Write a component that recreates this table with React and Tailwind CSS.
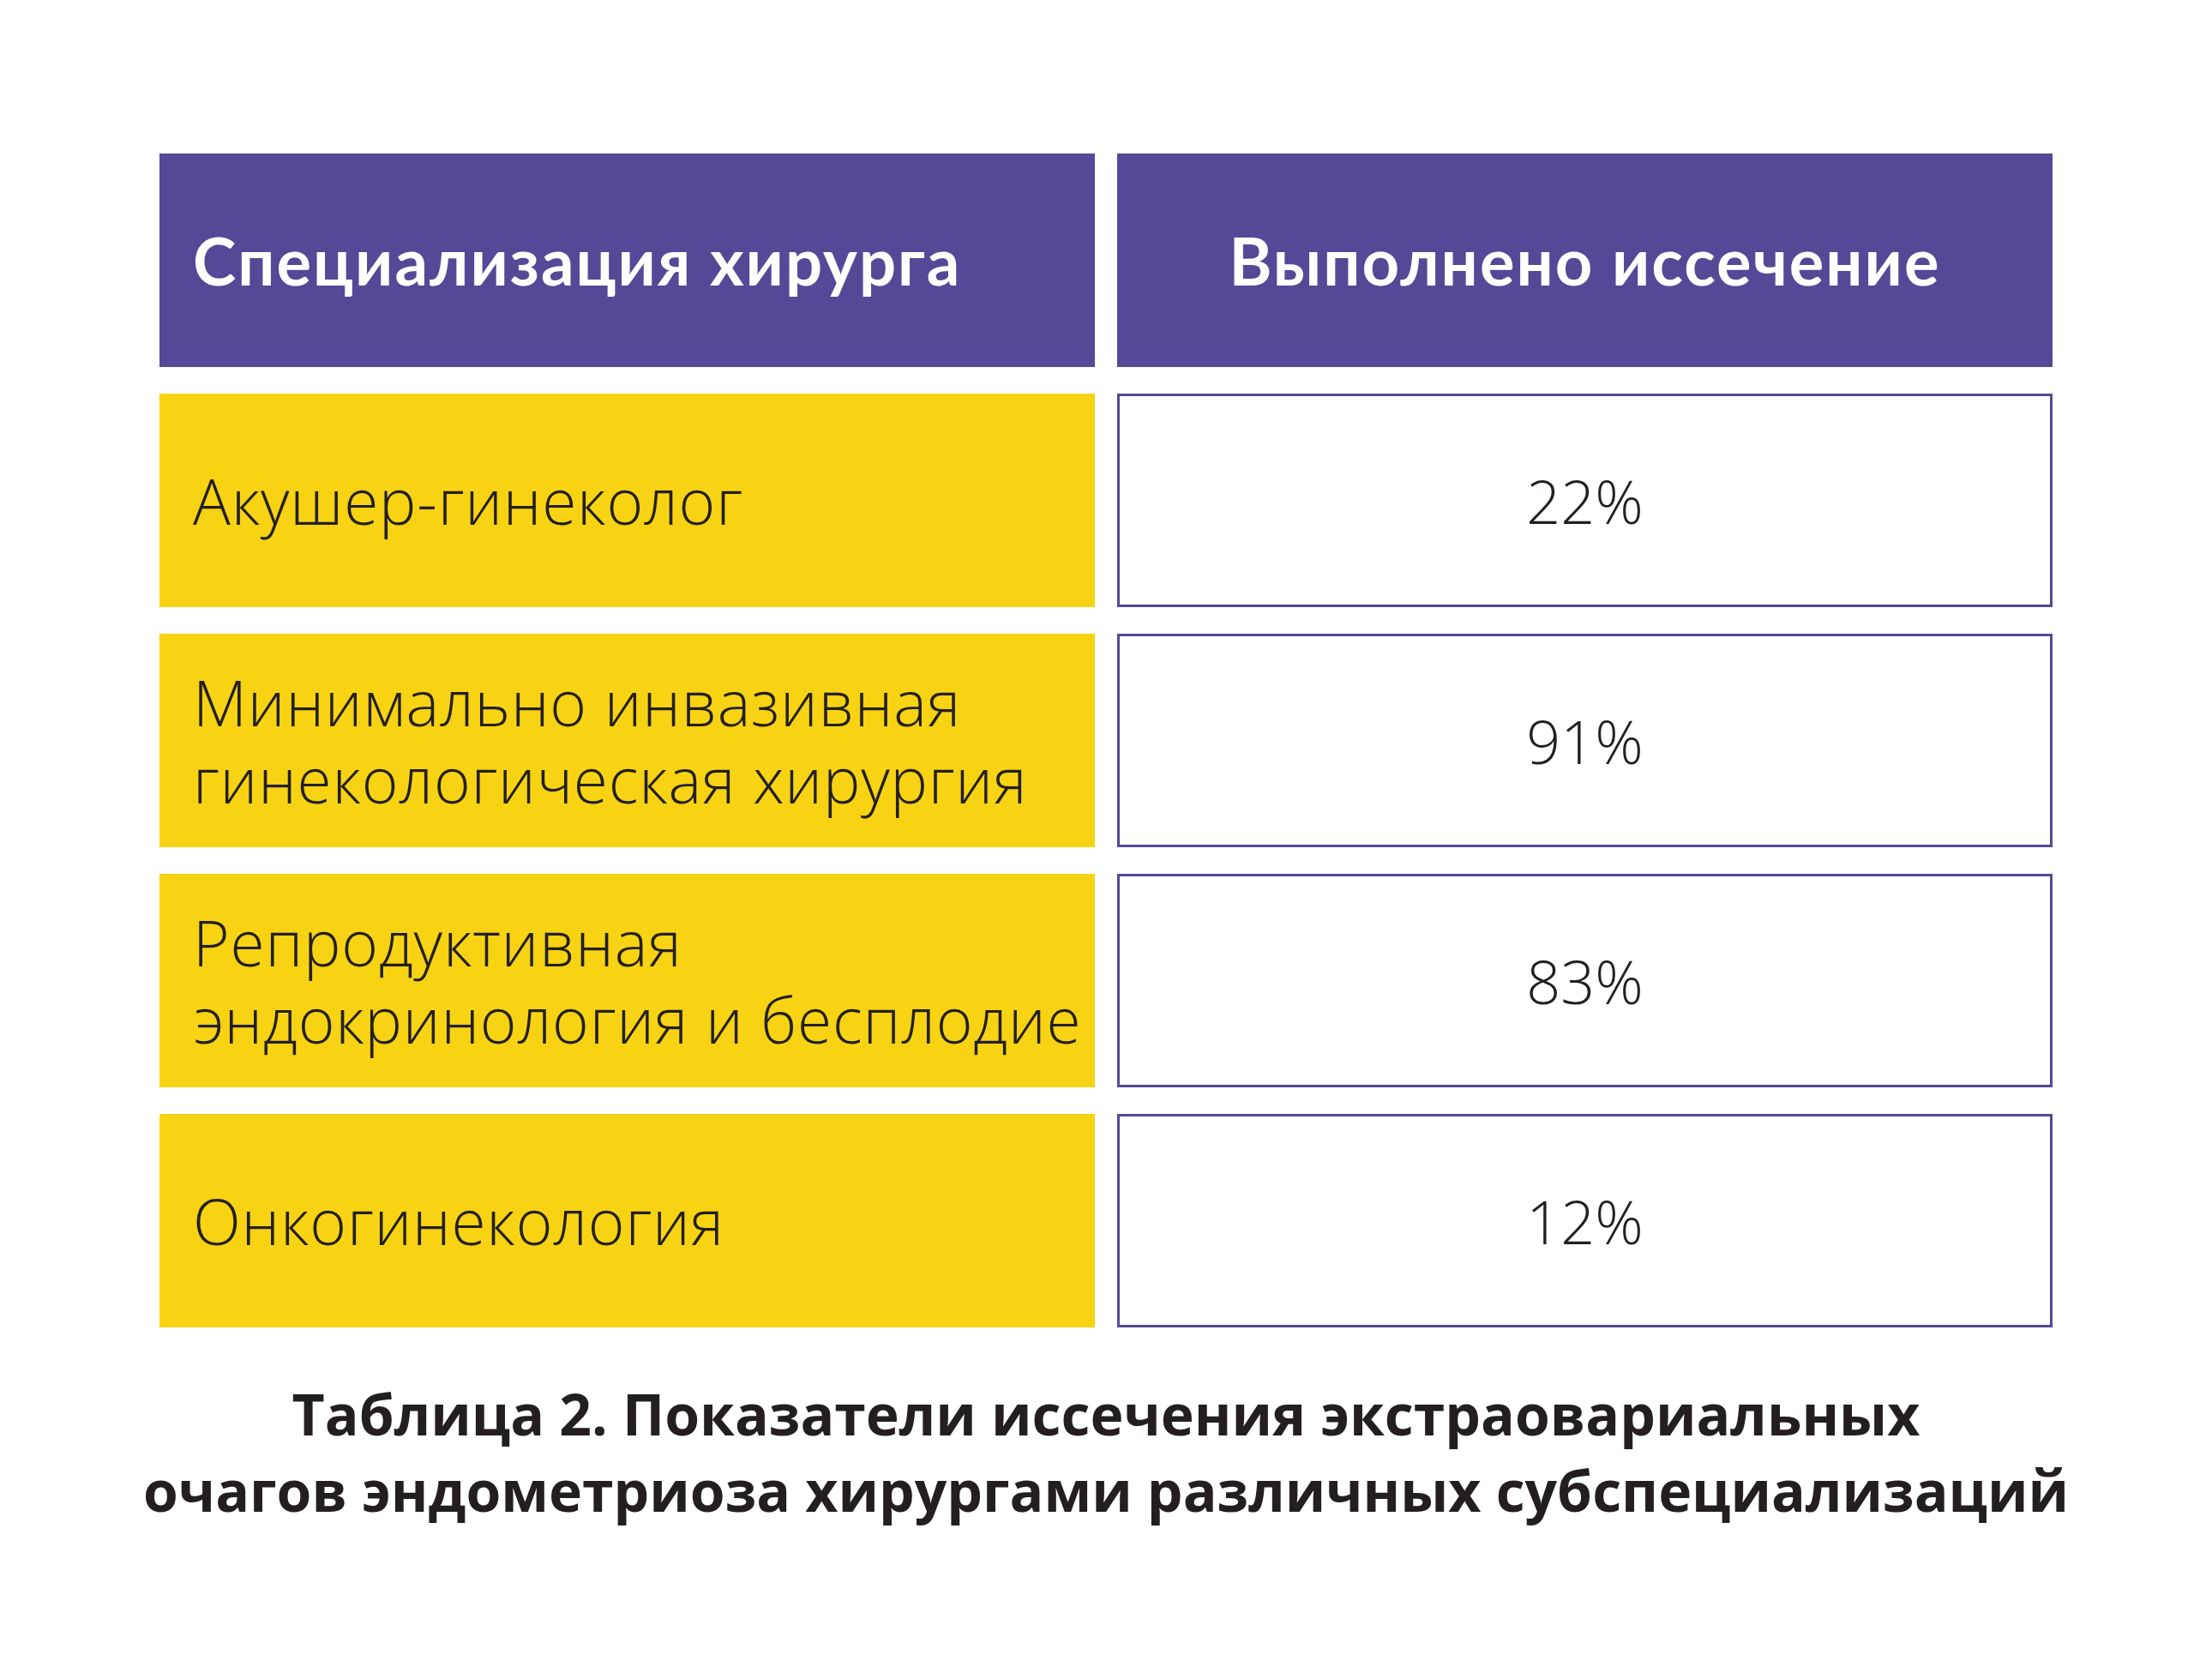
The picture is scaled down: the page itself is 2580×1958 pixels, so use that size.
const rows = [
  { name: ["Акушер-гинеколог"], value: "22%" },
  { name: ["Минимально инвазивная", "гинекологическая хирургия"], value: "91%" },
  { name: ["Репродуктивная", "эндокринология и бесплодие"], value: "83%" },
  { name: ["Онкогинекология"], value: "12%" },
];

export default function App() {
  return (
    <div className="w-[2580px] h-[1958px] bg-white font-['Open_Sans','Lato',sans-serif] text-[#231f20]">
      <div className="pt-[179px] px-[186px]">
        <div className="grid grid-cols-2 gap-x-[26px] gap-y-[31px]">
          {/* header */}
          <div className="h-[249px] bg-[#554896] flex items-center pl-[39px]">
            <span className="text-white font-['Lato',sans-serif] font-bold text-[76px] tracking-[2px] leading-none whitespace-nowrap">
              Специализация хирурга
            </span>
          </div>
          <div className="h-[249px] bg-[#554896] flex items-center justify-center">
            <span className="text-white font-['Lato',sans-serif] font-bold text-[76px] tracking-[2px] leading-none whitespace-nowrap">
              Выполнено иссечение
            </span>
          </div>

          {rows.map((row) => (
            <>
              <div
                key={row.value + "-name"}
                className="h-[249px] bg-[#f7d313] flex flex-col justify-center pl-[39px]"
              >
                {row.name.map((line) => (
                  <div
                    key={line}
                    className="text-[73px] leading-[90px] font-light tracking-[0.8px] whitespace-nowrap"
                  >
                    {line}
                  </div>
                ))}
              </div>
              <div
                key={row.value}
                className="h-[249px] border-[3px] border-[#554896] flex items-center justify-center"
              >
                <span className="text-[70px] leading-none font-light">{row.value}</span>
              </div>
            </>
          ))}
        </div>
      </div>

      {/* caption */}
      <div className="mt-[56px] flex flex-col items-center font-bold text-[66px] leading-[89px]">
        <div className="whitespace-nowrap">Таблица 2. Показатели иссечения экстраовариальных</div>
        <div className="whitespace-nowrap">очагов эндометриоза хирургами различных субспециализаций</div>
      </div>
    </div>
  );
}
